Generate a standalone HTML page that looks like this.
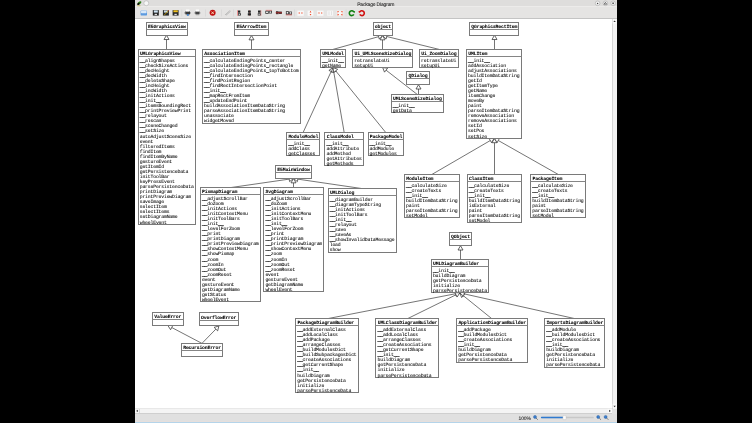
<!DOCTYPE html>
<html><head><meta charset="utf-8">
<style>
html,body{margin:0;padding:0;width:752px;height:423px;overflow:hidden;background:#000;}
#win{position:absolute;left:135px;top:0;width:482px;height:423px;background:#e3e3e3;overflow:hidden;}
#title{position:absolute;left:0;top:0;width:482px;height:6.4px;background:#dedddc;}
#tb{position:absolute;left:0;top:6.4px;width:482px;height:12.6px;background:#e5e4e3;border-top:1.6px solid #ecebea;border-bottom:1px solid #c4c4c4;box-sizing:border-box;}
#canvas{position:absolute;left:0;top:19px;width:477px;height:390px;background:#fff;}
#vsb{position:absolute;left:477px;top:19px;width:5px;height:390px;background:#f3f3f3;border-left:1px solid #d6d6d6;box-sizing:border-box;}
#hsb{position:absolute;left:0;top:408px;width:477px;height:5.6px;background:#f4f4f4;border-top:1px solid #e8e8e8;border-bottom:1px solid #cfcfcf;box-sizing:border-box;}
#corner{position:absolute;left:477px;top:409px;width:5px;height:4.5px;background:#e3e3e3;}
#status{position:absolute;left:0;top:413.5px;width:482px;height:8px;background:#e0e0e0;}
#bstrip{position:absolute;left:0;top:421.6px;width:482px;height:1.4px;background:#b4d4ea;}
#pstrip{position:absolute;left:0;top:420.6px;width:482px;height:1px;background:#e6dfdc;}
#tbsep{position:absolute;top:9px;width:0.6px;height:8px;background:#d0d0d0;}
svg{position:absolute;left:0;top:0;will-change:transform;}
.d line{stroke:#858585;stroke-width:1;}
.d line.cn{stroke:#3a3a3a;stroke-width:0.7;}
.d .bx{fill:#fff;stroke:#7a7a7a;stroke-width:1;}
.d .ar{fill:#fff;stroke:#333;stroke-width:0.75;}
.d text{font-family:"Liberation Mono",monospace;font-size:4.8px;letter-spacing:-0.18px;fill:#000;stroke:#000;stroke-width:0.06px;text-rendering:geometricPrecision;}
.d tspan.u{stroke-width:0.4px;stroke:#222;}
.d text.nm{font-weight:bold;font-size:4.8px;stroke-width:0.05px;}
</style></head><body>
<div id="win">
<div id="title"></div>
<div id="tb"></div>
<div id="canvas"></div>
<div id="vsb"></div>
<div id="hsb"></div>
<div id="corner"></div>
<div id="status"></div>
<div id="pstrip"></div>
<div id="bstrip"></div>
</div>
<svg class="d" width="752" height="423" viewBox="0 0 752 423" style="position:absolute;left:0;top:0">
<defs><clipPath id="cc"><rect x="135" y="19" width="477" height="390"/></clipPath></defs>
<g clip-path="url(#cc)">
<line class="cn" x1="166.50" y1="49.40" x2="166.50" y2="39.53"/>
<polygon class="ar" points="166.50,35.20 169.00,39.53 164.00,39.53"/>
<line class="cn" x1="251.50" y1="49.40" x2="251.50" y2="39.83"/>
<polygon class="ar" points="251.50,35.50 254.00,39.83 249.00,39.83"/>
<line class="cn" x1="494.50" y1="49.40" x2="494.50" y2="39.53"/>
<polygon class="ar" points="494.50,35.20 497.00,39.53 492.00,39.53"/>
<line class="cn" x1="333.00" y1="49.40" x2="378.63" y2="36.66"/>
<polygon class="ar" points="382.80,35.50 379.30,39.07 377.96,34.26"/>
<line class="cn" x1="382.50" y1="49.40" x2="382.50" y2="39.83"/>
<polygon class="ar" points="382.50,35.50 385.00,39.83 380.00,39.83"/>
<line class="cn" x1="439.15" y1="49.40" x2="386.71" y2="36.53"/>
<polygon class="ar" points="382.50,35.50 387.30,34.10 386.11,38.96"/>
<line class="cn" x1="303.05" y1="132.60" x2="331.19" y2="71.45"/>
<polygon class="ar" points="333.00,67.52 333.46,72.50 328.92,70.41"/>
<line class="cn" x1="344.20" y1="132.60" x2="333.73" y2="71.79"/>
<polygon class="ar" points="333.00,67.52 336.20,71.36 331.27,72.21"/>
<line class="cn" x1="385.85" y1="132.60" x2="335.73" y2="70.88"/>
<polygon class="ar" points="333.00,67.52 337.67,69.31 333.79,72.46"/>
<line class="cn" x1="417.20" y1="94.40" x2="386.07" y2="70.18"/>
<polygon class="ar" points="382.65,67.52 387.60,68.21 384.53,72.15"/>
<line class="cn" x1="418.50" y1="94.40" x2="418.50" y2="89.03"/>
<polygon class="ar" points="418.50,84.70 421.00,89.03 416.00,89.03"/>
<line class="cn" x1="432.00" y1="174.40" x2="490.31" y2="140.53"/>
<polygon class="ar" points="494.05,138.36 491.56,142.70 489.05,138.37"/>
<line class="cn" x1="494.50" y1="174.40" x2="494.50" y2="142.69"/>
<polygon class="ar" points="494.50,138.36 497.00,142.69 492.00,142.69"/>
<line class="cn" x1="558.15" y1="174.40" x2="498.27" y2="140.49"/>
<polygon class="ar" points="494.50,138.36 499.50,138.32 497.04,142.67"/>
<line class="cn" x1="230.55" y1="187.60" x2="289.21" y2="179.12"/>
<polygon class="ar" points="293.50,178.50 289.57,181.59 288.86,176.65"/>
<line class="cn" x1="293.50" y1="187.60" x2="293.50" y2="182.83"/>
<polygon class="ar" points="293.50,178.50 296.00,182.83 291.00,182.83"/>
<line class="cn" x1="362.15" y1="188.60" x2="297.78" y2="179.13"/>
<polygon class="ar" points="293.50,178.50 298.15,176.66 297.42,181.60"/>
<line class="cn" x1="460.50" y1="259.60" x2="460.50" y2="250.03"/>
<polygon class="ar" points="460.50,245.70 463.00,250.03 458.00,250.03"/>
<line class="cn" x1="326.80" y1="318.80" x2="455.60" y2="293.73"/>
<polygon class="ar" points="459.85,292.90 456.08,296.18 455.12,291.27"/>
<line class="cn" x1="407.25" y1="318.80" x2="455.97" y2="294.81"/>
<polygon class="ar" points="459.85,292.90 457.07,297.06 454.86,292.57"/>
<line class="cn" x1="491.95" y1="318.80" x2="463.22" y2="295.62"/>
<polygon class="ar" points="459.85,292.90 464.79,293.67 461.65,297.56"/>
<line class="cn" x1="574.70" y1="318.60" x2="464.08" y2="293.85"/>
<polygon class="ar" points="459.85,292.90 464.62,291.41 463.53,296.29"/>
<line class="cn" x1="201.95" y1="343.40" x2="171.73" y2="327.51"/>
<polygon class="ar" points="167.90,325.50 172.90,325.30 170.57,329.73"/>
<line class="cn" x1="201.95" y1="343.40" x2="215.88" y2="329.10"/>
<polygon class="ar" points="218.90,326.00 217.67,330.85 214.09,327.36"/>
<rect x="146.5" y="22.5" width="41.0" height="13.0" class="bx"/>
<line x1="146.5" y1="29.5" x2="187.5" y2="29.5"/>
<text x="148.00" y="27.90" class="nm">E5GraphicsView</text>
<rect x="234.5" y="22.5" width="34.0" height="13.0" class="bx"/>
<line x1="234.5" y1="29.5" x2="268.5" y2="29.5"/>
<text x="236.50" y="28.20" class="nm">E5ArrowItem</text>
<rect x="373.5" y="22.5" width="19.0" height="13.0" class="bx"/>
<line x1="373.5" y1="29.5" x2="392.5" y2="29.5"/>
<text x="374.80" y="28.20" class="nm">object</text>
<rect x="469.5" y="22.5" width="49.0" height="13.0" class="bx"/>
<line x1="469.5" y1="29.5" x2="518.5" y2="29.5"/>
<text x="471.30" y="27.90" class="nm">QGraphicsRectItem</text>
<rect x="138.5" y="49.5" width="57.0" height="175.0" class="bx"/>
<line x1="138.5" y1="56.5" x2="195.5" y2="56.5"/>
<text x="139.90" y="54.60" class="nm">UMLGraphicsView</text>
<text x="139.70" y="61.60"><tspan class="u">__</tspan>alignShapes</text>
<text x="139.70" y="66.66"><tspan class="u">__</tspan>checkSizeActions</text>
<text x="139.70" y="71.72"><tspan class="u">__</tspan>decHeight</text>
<text x="139.70" y="76.78"><tspan class="u">__</tspan>decWidth</text>
<text x="139.70" y="81.84"><tspan class="u">__</tspan>deleteShape</text>
<text x="139.70" y="86.90"><tspan class="u">__</tspan>incHeight</text>
<text x="139.70" y="91.96"><tspan class="u">__</tspan>incWidth</text>
<text x="139.70" y="97.02"><tspan class="u">__</tspan>initActions</text>
<text x="139.70" y="102.08"><tspan class="u">__</tspan>init<tspan class="u">__</tspan></text>
<text x="139.70" y="107.14"><tspan class="u">__</tspan>itemsBoundingRect</text>
<text x="139.70" y="112.20"><tspan class="u">__</tspan>printPreviewPrint</text>
<text x="139.70" y="117.26"><tspan class="u">__</tspan>relayout</text>
<text x="139.70" y="122.32"><tspan class="u">__</tspan>rescan</text>
<text x="139.70" y="127.38"><tspan class="u">__</tspan>sceneChanged</text>
<text x="139.70" y="132.44"><tspan class="u">__</tspan>setSize</text>
<text x="139.70" y="137.50">autoAdjustSceneSize</text>
<text x="139.70" y="142.56">event</text>
<text x="139.70" y="147.62">filteredItems</text>
<text x="139.70" y="152.68">findItem</text>
<text x="139.70" y="157.74">findItemByName</text>
<text x="139.70" y="162.80">gestureEvent</text>
<text x="139.70" y="167.86">getItemId</text>
<text x="139.70" y="172.92">getPersistenceData</text>
<text x="139.70" y="177.98">initToolBar</text>
<text x="139.70" y="183.04">keyPressEvent</text>
<text x="139.70" y="188.10">parsePersistenceData</text>
<text x="139.70" y="193.16">printDiagram</text>
<text x="139.70" y="198.22">printPreviewDiagram</text>
<text x="139.70" y="203.28">saveImage</text>
<text x="139.70" y="208.34">selectItem</text>
<text x="139.70" y="213.40">selectItems</text>
<text x="139.70" y="218.46">setDiagramName</text>
<text x="139.70" y="223.52">wheelEvent</text>
<rect x="202.5" y="49.5" width="98.0" height="74.0" class="bx"/>
<line x1="202.5" y1="56.5" x2="300.5" y2="56.5"/>
<text x="204.30" y="54.60" class="nm">AssociationItem</text>
<text x="204.10" y="61.60"><tspan class="u">__</tspan>calculateEndingPoints<tspan class="u">_</tspan>center</text>
<text x="204.10" y="66.66"><tspan class="u">__</tspan>calculateEndingPoints<tspan class="u">_</tspan>rectangle</text>
<text x="204.10" y="71.72"><tspan class="u">__</tspan>calculateEndingPoints<tspan class="u">_</tspan>topToBottom</text>
<text x="204.10" y="76.78"><tspan class="u">__</tspan>findIntersection</text>
<text x="204.10" y="81.84"><tspan class="u">__</tspan>findPointRegion</text>
<text x="204.10" y="86.90"><tspan class="u">__</tspan>findRectIntersectionPoint</text>
<text x="204.10" y="91.96"><tspan class="u">__</tspan>init<tspan class="u">__</tspan></text>
<text x="204.10" y="97.02"><tspan class="u">__</tspan>mapRectFromItem</text>
<text x="204.10" y="102.08"><tspan class="u">__</tspan>updateEndPoint</text>
<text x="204.10" y="107.14">buildAssociationItemDataString</text>
<text x="204.10" y="112.20">parseAssociationItemDataString</text>
<text x="204.10" y="117.26">unassociate</text>
<text x="204.10" y="122.32">widgetMoved</text>
<rect x="320.5" y="49.5" width="25.0" height="18.0" class="bx"/>
<line x1="320.5" y1="56.5" x2="345.5" y2="56.5"/>
<text x="322.20" y="54.60" class="nm">UMLModel</text>
<text x="322.00" y="61.60"><tspan class="u">__</tspan>init<tspan class="u">__</tspan></text>
<text x="322.00" y="66.66">getName</text>
<rect x="352.5" y="49.5" width="60.0" height="18.0" class="bx"/>
<line x1="352.5" y1="56.5" x2="412.5" y2="56.5"/>
<text x="354.50" y="54.60" class="nm">Ui_UMLSceneSizeDialog</text>
<text x="354.30" y="61.60">retranslateUi</text>
<text x="354.30" y="66.66">setupUi</text>
<rect x="419.5" y="49.5" width="39.0" height="18.0" class="bx"/>
<line x1="419.5" y1="56.5" x2="458.5" y2="56.5"/>
<text x="421.30" y="54.60" class="nm">Ui_ZoomDialog</text>
<text x="421.10" y="61.60">retranslateUi</text>
<text x="421.10" y="66.66">setupUi</text>
<rect x="466.5" y="49.5" width="55.0" height="89.0" class="bx"/>
<line x1="466.5" y1="56.5" x2="521.5" y2="56.5"/>
<text x="468.30" y="54.60" class="nm">UMLItem</text>
<text x="468.10" y="61.60"><tspan class="u">__</tspan>init<tspan class="u">__</tspan></text>
<text x="468.10" y="66.66">addAssociation</text>
<text x="468.10" y="71.72">adjustAssociations</text>
<text x="468.10" y="76.78">buildItemDataString</text>
<text x="468.10" y="81.84">getId</text>
<text x="468.10" y="86.90">getItemType</text>
<text x="468.10" y="91.96">getName</text>
<text x="468.10" y="97.02">itemChange</text>
<text x="468.10" y="102.08">moveBy</text>
<text x="468.10" y="107.14">paint</text>
<text x="468.10" y="112.20">parseItemDataString</text>
<text x="468.10" y="117.26">removeAssociation</text>
<text x="468.10" y="122.32">removeAssociations</text>
<text x="468.10" y="127.38">setId</text>
<text x="468.10" y="132.44">setPos</text>
<text x="468.10" y="137.50">setSize</text>
<rect x="406.5" y="71.5" width="23.0" height="13.0" class="bx"/>
<line x1="406.5" y1="78.5" x2="429.5" y2="78.5"/>
<text x="408.60" y="77.40" class="nm">QDialog</text>
<rect x="391.5" y="94.5" width="52.0" height="18.0" class="bx"/>
<line x1="391.5" y1="101.5" x2="443.5" y2="101.5"/>
<text x="393.00" y="99.60" class="nm">UMLSceneSizeDialog</text>
<text x="392.80" y="106.60"><tspan class="u">__</tspan>init<tspan class="u">__</tspan></text>
<text x="392.80" y="111.66">getData</text>
<rect x="286.5" y="132.5" width="33.0" height="23.0" class="bx"/>
<line x1="286.5" y1="139.5" x2="319.5" y2="139.5"/>
<text x="288.40" y="137.80" class="nm">ModuleModel</text>
<text x="288.20" y="144.80"><tspan class="u">__</tspan>init<tspan class="u">__</tspan></text>
<text x="288.20" y="149.86">addClass</text>
<text x="288.20" y="154.92">getClasses</text>
<rect x="324.5" y="132.5" width="39.0" height="33.0" class="bx"/>
<line x1="324.5" y1="139.5" x2="363.5" y2="139.5"/>
<text x="326.70" y="137.80" class="nm">ClassModel</text>
<text x="326.50" y="144.80"><tspan class="u">__</tspan>init<tspan class="u">__</tspan></text>
<text x="326.50" y="149.86">addAttribute</text>
<text x="326.50" y="154.92">addMethod</text>
<text x="326.50" y="159.98">getAttributes</text>
<text x="326.50" y="165.04">getMethods</text>
<rect x="368.5" y="132.5" width="35.0" height="23.0" class="bx"/>
<line x1="368.5" y1="139.5" x2="403.5" y2="139.5"/>
<text x="369.80" y="137.80" class="nm">PackageModel</text>
<text x="369.60" y="144.80"><tspan class="u">__</tspan>init<tspan class="u">__</tspan></text>
<text x="369.60" y="149.86">addModule</text>
<text x="369.60" y="154.92">getModules</text>
<rect x="404.5" y="174.5" width="55.0" height="43.0" class="bx"/>
<line x1="404.5" y1="181.5" x2="459.5" y2="181.5"/>
<text x="406.30" y="179.60" class="nm">ModuleItem</text>
<text x="406.10" y="186.60"><tspan class="u">__</tspan>calculateSize</text>
<text x="406.10" y="191.66"><tspan class="u">__</tspan>createTexts</text>
<text x="406.10" y="196.72"><tspan class="u">__</tspan>init<tspan class="u">__</tspan></text>
<text x="406.10" y="201.78">buildItemDataString</text>
<text x="406.10" y="206.84">paint</text>
<text x="406.10" y="211.90">parseItemDataString</text>
<text x="406.10" y="216.96">setModel</text>
<rect x="467.5" y="174.5" width="54.0" height="48.0" class="bx"/>
<line x1="467.5" y1="181.5" x2="521.5" y2="181.5"/>
<text x="468.90" y="179.60" class="nm">ClassItem</text>
<text x="468.70" y="186.60"><tspan class="u">__</tspan>calculateSize</text>
<text x="468.70" y="191.66"><tspan class="u">__</tspan>createTexts</text>
<text x="468.70" y="196.72"><tspan class="u">__</tspan>init<tspan class="u">__</tspan></text>
<text x="468.70" y="201.78">buildItemDataString</text>
<text x="468.70" y="206.84">isExternal</text>
<text x="468.70" y="211.90">paint</text>
<text x="468.70" y="216.96">parseItemDataString</text>
<text x="468.70" y="222.02">setModel</text>
<rect x="530.5" y="174.5" width="55.0" height="43.0" class="bx"/>
<line x1="530.5" y1="181.5" x2="585.5" y2="181.5"/>
<text x="532.50" y="179.60" class="nm">PackageItem</text>
<text x="532.30" y="186.60"><tspan class="u">__</tspan>calculateSize</text>
<text x="532.30" y="191.66"><tspan class="u">__</tspan>createTexts</text>
<text x="532.30" y="196.72"><tspan class="u">__</tspan>init<tspan class="u">__</tspan></text>
<text x="532.30" y="201.78">buildItemDataString</text>
<text x="532.30" y="206.84">paint</text>
<text x="532.30" y="211.90">parseItemDataString</text>
<text x="532.30" y="216.96">setModel</text>
<rect x="275.5" y="165.5" width="36.0" height="13.0" class="bx"/>
<line x1="275.5" y1="172.5" x2="311.5" y2="172.5"/>
<text x="277.30" y="171.20" class="nm">E5MainWindow</text>
<rect x="200.5" y="187.5" width="60.0" height="114.0" class="bx"/>
<line x1="200.5" y1="194.5" x2="260.5" y2="194.5"/>
<text x="202.10" y="192.80" class="nm">PixmapDiagram</text>
<text x="201.90" y="199.80"><tspan class="u">__</tspan>adjustScrollBar</text>
<text x="201.90" y="204.86"><tspan class="u">__</tspan>doZoom</text>
<text x="201.90" y="209.92"><tspan class="u">__</tspan>initActions</text>
<text x="201.90" y="214.98"><tspan class="u">__</tspan>initContextMenu</text>
<text x="201.90" y="220.04"><tspan class="u">__</tspan>initToolBars</text>
<text x="201.90" y="225.10"><tspan class="u">__</tspan>init<tspan class="u">__</tspan></text>
<text x="201.90" y="230.16"><tspan class="u">__</tspan>levelForZoom</text>
<text x="201.90" y="235.22"><tspan class="u">__</tspan>print</text>
<text x="201.90" y="240.28"><tspan class="u">__</tspan>printDiagram</text>
<text x="201.90" y="245.34"><tspan class="u">__</tspan>printPreviewDiagram</text>
<text x="201.90" y="250.40"><tspan class="u">__</tspan>showContextMenu</text>
<text x="201.90" y="255.46"><tspan class="u">__</tspan>showPixmap</text>
<text x="201.90" y="260.52"><tspan class="u">__</tspan>zoom</text>
<text x="201.90" y="265.58"><tspan class="u">__</tspan>zoomIn</text>
<text x="201.90" y="270.64"><tspan class="u">__</tspan>zoomOut</text>
<text x="201.90" y="275.70"><tspan class="u">__</tspan>zoomReset</text>
<text x="201.90" y="280.76">event</text>
<text x="201.90" y="285.82">gestureEvent</text>
<text x="201.90" y="290.88">getDiagramName</text>
<text x="201.90" y="295.94">getStatus</text>
<text x="201.90" y="301.00">wheelEvent</text>
<rect x="263.5" y="187.5" width="60.0" height="104.0" class="bx"/>
<line x1="263.5" y1="194.5" x2="323.5" y2="194.5"/>
<text x="265.60" y="192.80" class="nm">SvgDiagram</text>
<text x="265.40" y="199.80"><tspan class="u">__</tspan>adjustScrollBar</text>
<text x="265.40" y="204.86"><tspan class="u">__</tspan>doZoom</text>
<text x="265.40" y="209.92"><tspan class="u">__</tspan>initActions</text>
<text x="265.40" y="214.98"><tspan class="u">__</tspan>initContextMenu</text>
<text x="265.40" y="220.04"><tspan class="u">__</tspan>initToolBars</text>
<text x="265.40" y="225.10"><tspan class="u">__</tspan>init<tspan class="u">__</tspan></text>
<text x="265.40" y="230.16"><tspan class="u">__</tspan>levelForZoom</text>
<text x="265.40" y="235.22"><tspan class="u">__</tspan>print</text>
<text x="265.40" y="240.28"><tspan class="u">__</tspan>printDiagram</text>
<text x="265.40" y="245.34"><tspan class="u">__</tspan>printPreviewDiagram</text>
<text x="265.40" y="250.40"><tspan class="u">__</tspan>showContextMenu</text>
<text x="265.40" y="255.46"><tspan class="u">__</tspan>zoom</text>
<text x="265.40" y="260.52"><tspan class="u">__</tspan>zoomIn</text>
<text x="265.40" y="265.58"><tspan class="u">__</tspan>zoomOut</text>
<text x="265.40" y="270.64"><tspan class="u">__</tspan>zoomReset</text>
<text x="265.40" y="275.70">event</text>
<text x="265.40" y="280.76">gestureEvent</text>
<text x="265.40" y="285.82">getDiagramName</text>
<text x="265.40" y="290.88">wheelEvent</text>
<rect x="328.5" y="188.5" width="68.0" height="64.0" class="bx"/>
<line x1="328.5" y1="195.5" x2="396.5" y2="195.5"/>
<text x="329.90" y="193.80" class="nm">UMLDialog</text>
<text x="329.70" y="200.80"><tspan class="u">__</tspan>diagramBuilder</text>
<text x="329.70" y="205.86"><tspan class="u">__</tspan>diagramTypeString</text>
<text x="329.70" y="210.92"><tspan class="u">__</tspan>initActions</text>
<text x="329.70" y="215.98"><tspan class="u">__</tspan>initToolBars</text>
<text x="329.70" y="221.04"><tspan class="u">__</tspan>init<tspan class="u">__</tspan></text>
<text x="329.70" y="226.10"><tspan class="u">__</tspan>relayout</text>
<text x="329.70" y="231.16"><tspan class="u">__</tspan>save</text>
<text x="329.70" y="236.22"><tspan class="u">__</tspan>saveAs</text>
<text x="329.70" y="241.28"><tspan class="u">__</tspan>showInvalidDataMessage</text>
<text x="329.70" y="246.34">load</text>
<text x="329.70" y="251.40">show</text>
<rect x="449.5" y="232.5" width="22.0" height="13.0" class="bx"/>
<line x1="449.5" y1="239.5" x2="471.5" y2="239.5"/>
<text x="451.10" y="238.40" class="nm">QObject</text>
<rect x="431.5" y="259.5" width="57.0" height="33.0" class="bx"/>
<line x1="431.5" y1="266.5" x2="488.5" y2="266.5"/>
<text x="433.10" y="264.80" class="nm">UMLDiagramBuilder</text>
<text x="432.90" y="271.80"><tspan class="u">__</tspan>init<tspan class="u">__</tspan></text>
<text x="432.90" y="276.86">buildDiagram</text>
<text x="432.90" y="281.92">getPersistenceData</text>
<text x="432.90" y="286.98">initialize</text>
<text x="432.90" y="292.04">parsePersistenceData</text>
<rect x="152.5" y="312.5" width="31.0" height="13.0" class="bx"/>
<line x1="152.5" y1="319.5" x2="183.5" y2="319.5"/>
<text x="154.20" y="318.20" class="nm">ValueError</text>
<rect x="199.5" y="312.5" width="39.0" height="13.0" class="bx"/>
<line x1="199.5" y1="320.5" x2="238.5" y2="320.5"/>
<text x="201.10" y="318.70" class="nm">OverflowError</text>
<rect x="181.5" y="343.5" width="41.0" height="13.0" class="bx"/>
<line x1="181.5" y1="350.5" x2="222.5" y2="350.5"/>
<text x="183.20" y="349.20" class="nm">RecursionError</text>
<rect x="295.5" y="318.5" width="63.0" height="74.0" class="bx"/>
<line x1="295.5" y1="325.5" x2="358.5" y2="325.5"/>
<text x="297.40" y="324.00" class="nm">PackageDiagramBuilder</text>
<text x="297.20" y="331.00"><tspan class="u">__</tspan>addExternalClass</text>
<text x="297.20" y="336.06"><tspan class="u">__</tspan>addLocalClass</text>
<text x="297.20" y="341.12"><tspan class="u">__</tspan>addPackage</text>
<text x="297.20" y="346.18"><tspan class="u">__</tspan>arrangeClasses</text>
<text x="297.20" y="351.24"><tspan class="u">__</tspan>buildModulesDict</text>
<text x="297.20" y="356.30"><tspan class="u">__</tspan>buildSubpackagesDict</text>
<text x="297.20" y="361.36"><tspan class="u">__</tspan>createAssociations</text>
<text x="297.20" y="366.42"><tspan class="u">__</tspan>getCurrentShape</text>
<text x="297.20" y="371.48"><tspan class="u">__</tspan>init<tspan class="u">__</tspan></text>
<text x="297.20" y="376.54">buildDiagram</text>
<text x="297.20" y="381.60">getPersistenceData</text>
<text x="297.20" y="386.66">initialize</text>
<text x="297.20" y="391.72">parsePersistenceData</text>
<rect x="375.5" y="318.5" width="63.0" height="59.0" class="bx"/>
<line x1="375.5" y1="325.5" x2="438.5" y2="325.5"/>
<text x="377.70" y="324.00" class="nm">UMLClassDiagramBuilder</text>
<text x="377.50" y="331.00"><tspan class="u">__</tspan>addExternalClass</text>
<text x="377.50" y="336.06"><tspan class="u">__</tspan>addLocalClass</text>
<text x="377.50" y="341.12"><tspan class="u">__</tspan>arrangeClasses</text>
<text x="377.50" y="346.18"><tspan class="u">__</tspan>createAssociations</text>
<text x="377.50" y="351.24"><tspan class="u">__</tspan>getCurrentShape</text>
<text x="377.50" y="356.30"><tspan class="u">__</tspan>init<tspan class="u">__</tspan></text>
<text x="377.50" y="361.36">buildDiagram</text>
<text x="377.50" y="366.42">getPersistenceData</text>
<text x="377.50" y="371.48">initialize</text>
<text x="377.50" y="376.54">parsePersistenceData</text>
<rect x="456.5" y="318.5" width="71.0" height="44.0" class="bx"/>
<line x1="456.5" y1="325.5" x2="527.5" y2="325.5"/>
<text x="458.40" y="324.00" class="nm">ApplicationDiagramBuilder</text>
<text x="458.20" y="331.00"><tspan class="u">__</tspan>addPackage</text>
<text x="458.20" y="336.06"><tspan class="u">__</tspan>buildModulesDict</text>
<text x="458.20" y="341.12"><tspan class="u">__</tspan>createAssociations</text>
<text x="458.20" y="346.18"><tspan class="u">__</tspan>init<tspan class="u">__</tspan></text>
<text x="458.20" y="351.24">buildDiagram</text>
<text x="458.20" y="356.30">getPersistenceData</text>
<text x="458.20" y="361.36">parsePersistenceData</text>
<rect x="544.5" y="318.5" width="60.0" height="49.0" class="bx"/>
<line x1="544.5" y1="325.5" x2="604.5" y2="325.5"/>
<text x="546.50" y="323.80" class="nm">ImportsDiagramBuilder</text>
<text x="546.30" y="330.80"><tspan class="u">__</tspan>addModule</text>
<text x="546.30" y="335.86"><tspan class="u">__</tspan>buildModulesDict</text>
<text x="546.30" y="340.92"><tspan class="u">__</tspan>createAssociations</text>
<text x="546.30" y="345.98"><tspan class="u">__</tspan>init<tspan class="u">__</tspan></text>
<text x="546.30" y="351.04">buildDiagram</text>
<text x="546.30" y="356.10">getPersistenceData</text>
<text x="546.30" y="361.16">initialize</text>
<text x="546.30" y="366.22">parsePersistenceData</text>
</g>

<!-- title bar -->
<g>
 <ellipse cx="139.4" cy="3.0" rx="2.3" ry="1.3" transform="rotate(-38 139.4 3.0)" fill="#2e7a18"/>
 <ellipse cx="138.4" cy="4.0" rx="1.3" ry="0.9" transform="rotate(-38 138.4 4.0)" fill="#0c0c0c"/>
 <rect x="137.2" y="5.0" width="3.3" height="1.3" fill="#cfc38c"/>
 <circle cx="146.3" cy="3.2" r="2.5" fill="#f6f6f6" stroke="#b0b0b0" stroke-width="0.6"/>
 <text x="375.7" y="5.5" text-anchor="middle" style="font-family:'Liberation Sans',sans-serif;font-size:5.0px;fill:#2a2a2a">Package Diagram</text>
 <circle cx="597.6" cy="3.3" r="2.3" fill="#f4f4f4" stroke="#a8a8a8" stroke-width="0.6"/>
 <circle cx="597.6" cy="3.5" r="0.7" fill="#444"/>
 <circle cx="605.4" cy="3.3" r="2.3" fill="#f4f4f4" stroke="#a8a8a8" stroke-width="0.6"/>
 <path d="M604.1,4.2 L605.4,2.3 L606.7,4.2 Z" fill="none" stroke="#333" stroke-width="0.6"/>
 <circle cx="613.1" cy="3.3" r="2.3" fill="#f4f4f4" stroke="#a8a8a8" stroke-width="0.6"/>
 <rect x="612.3" y="2.5" width="1.6" height="1.6" fill="#555"/>
</g>
<!-- toolbar icons -->
<g>
 <rect x="181.6" y="9.5" width="0.5" height="7" fill="#cfcfcf"/>
 <rect x="205.2" y="9.5" width="0.5" height="7" fill="#cfcfcf"/>
 <rect x="221.2" y="9.5" width="0.5" height="7" fill="#cfcfcf"/>
 <rect x="233.4" y="9.5" width="0.5" height="7" fill="#cfcfcf"/>
 <rect x="294" y="9.5" width="0.5" height="7" fill="#cfcfcf"/>
 <rect x="345.8" y="9.5" width="0.5" height="7" fill="#cfcfcf"/>
 <!-- open -->
 <rect x="140.6" y="10.4" width="6.4" height="5.2" rx="1.2" fill="#5b9ae0"/>
 <rect x="141" y="10.6" width="5.6" height="2.6" rx="0.8" fill="#d8e8f8"/>
 <!-- save -->
 <rect x="152.8" y="10.1" width="6" height="5.5" fill="#222"/>
 <rect x="153.8" y="10.4" width="4" height="2.2" fill="#d0e4f4"/>
 <rect x="154.6" y="13.8" width="2.4" height="1.3" fill="#ddd"/>
 <!-- save as -->
 <rect x="162.9" y="10.1" width="6" height="5.5" fill="#2a2a2a"/>
 <rect x="163.9" y="10.4" width="4" height="2.2" fill="#c8d8e0"/>
 <path d="M164.2,15.2 L168.4,10.6" stroke="#c9a000" stroke-width="0.8"/>
 <path d="M168.2,10.2 L168.9,10.9" stroke="#d33" stroke-width="0.8"/>
 <!-- save all -->
 <rect x="172.6" y="10.1" width="6" height="5.5" fill="#2a2a2a"/>
 <rect x="173.4" y="10.3" width="4.4" height="1.9" fill="#f0c020"/>
 <rect x="174.4" y="13.8" width="2.4" height="1.3" fill="#ddd"/>
 <!-- printers -->
 <rect x="184.4" y="12" width="6.4" height="1.8" fill="#a0a0a0"/>
 <rect x="185.4" y="11.3" width="4.6" height="3" fill="#3a3a3a"/>
 <rect x="186" y="9.5" width="3.4" height="2" fill="#fdfdfd"/>
 <rect x="185.8" y="14.2" width="3.8" height="1" fill="#8a8a8a"/>
 <rect x="187" y="13.9" width="1.8" height="1.9" rx="0.5" fill="#3a80d0"/>
 <rect x="194.4" y="12" width="6" height="1.8" fill="#a8a8a8"/>
 <rect x="195.4" y="11.3" width="4" height="3" fill="#444"/>
 <rect x="195.8" y="9.5" width="3.2" height="2" fill="#fdfdfd"/>
 <rect x="195.8" y="14.2" width="3.4" height="1" fill="#999"/>
 <!-- close -->
 <circle cx="212.6" cy="12.8" r="3" fill="#c01010"/>
 <path d="M211.3,11.5 L213.9,14.1 M213.9,11.5 L211.3,14.1" stroke="#f8e8c0" stroke-width="0.9"/>
 <!-- pencil -->
 <path d="M225,15 L229.8,10.6 M226,15.3 L230.6,11.2" stroke="#a8a8a8" stroke-width="0.7"/>
 <!-- align icons -->
 <rect x="237.3" y="10.2" width="0.6" height="5.6" fill="#f06060"/>
 <rect x="238" y="10.5" width="2.3" height="2.2" fill="#222"/><rect x="238" y="13.2" width="2.8" height="2.3" fill="#222"/><rect x="238.6" y="13.8" width="1.4" height="1" fill="#eee"/>
 <rect x="249.1" y="10.2" width="0.6" height="5.6" fill="#f06060"/>
 <rect x="248" y="10.5" width="2.8" height="2.2" fill="#222"/><rect x="247.8" y="13.2" width="3.2" height="2.3" fill="#222"/>
 <rect x="260.6" y="10.2" width="0.6" height="5.6" fill="#f06060"/>
 <rect x="258" y="10.5" width="2.6" height="2.2" fill="#222"/><rect x="257.8" y="13.2" width="2.8" height="2.3" fill="#222"/><rect x="258.4" y="13.8" width="1.4" height="1" fill="#eee"/>
 <rect x="265.8" y="9.9" width="6.2" height="0.7" fill="#f07070"/>
 <rect x="265.4" y="10.8" width="3.2" height="3" fill="#222"/><rect x="266.1" y="11.5" width="1.8" height="1.6" fill="#f4f4f4"/>
 <rect x="268.8" y="10.8" width="3.2" height="2.6" fill="#222"/><rect x="269.5" y="11.4" width="1.8" height="1.4" fill="#f4f4f4"/>
 <rect x="276" y="11.2" width="2.6" height="3" fill="#333"/><rect x="279" y="11.6" width="2.8" height="2.4" fill="#333"/>
 <rect x="275.8" y="11.9" width="6.1" height="1.6" fill="#8a2a2a"/>
 <rect x="285.8" y="14.5" width="6.2" height="0.7" fill="#c02020"/>
 <rect x="285.9" y="11.3" width="3" height="3" fill="#222"/><rect x="286.6" y="12" width="1.6" height="1.6" fill="#f4f4f4"/>
 <rect x="289.2" y="11.6" width="2.7" height="2.7" fill="#222"/><rect x="289.8" y="12.2" width="1.5" height="1.5" fill="#f4f4f4"/>
 <!-- resize icons -->
 <rect x="297.4" y="10.6" width="6.4" height="5.2" fill="#f8f8f8"/>
 <path d="M298,13 L299.8,12.2 L299.8,13.8 Z M303.2,13 L301.4,12.2 L301.4,13.8 Z" fill="#ee4422"/>
 <rect x="307.6" y="10.6" width="5.8" height="5.2" fill="#f8f8f8"/>
 <path d="M310.5,10.8 L309.6,12.4 L311.4,12.4 Z M310.5,15.6 L309.6,14 L311.4,14 Z" fill="#ee4422"/>
 <rect x="317.1" y="10.6" width="6.4" height="5.2" fill="#f8f8f8"/>
 <path d="M317.7,13 L319.5,12.2 L319.5,13.8 Z M322.9,13 L321.1,12.2 L321.1,13.8 Z" fill="#ee5533"/>
 <rect x="327.2" y="10.6" width="5.9" height="5.2" fill="#f6f6f6"/>
 <rect x="328.6" y="11.2" width="0.8" height="4" fill="#ddd"/><rect x="331" y="11.2" width="0.8" height="4" fill="#ddd"/>
 <rect x="336.8" y="10.6" width="6.4" height="5.2" fill="#f8f8f8"/>
 <path d="M337.3,11 L339.2,11.4 L337.7,12.8 Z M342.7,11 L340.8,11.4 L342.3,12.8 Z M337.3,15.4 L339.2,15 L337.7,13.6 Z M342.7,15.4 L340.8,15 L342.3,13.6 Z" fill="#ee4422"/>
 <!-- redo/undo -->
 <path d="M353.8,12 A2.4,2.4 0 1 0 353.8,14.4" fill="none" stroke="#108010" stroke-width="1.6"/>
 <path d="M352.6,11 L355.2,11.2 L354.4,13.2 Z" fill="#108010"/>
 <path d="M359.8,12 A2.4,2.4 0 1 1 359.8,14.4" fill="none" stroke="#d01010" stroke-width="1.6"/>
 <path d="M361,11 L358.4,11.2 L359.2,13.2 Z" fill="#d01010"/>
</g>
<!-- scrollbars -->
<g>
 <rect x="612.6" y="19.2" width="4" height="4.2" fill="#fafafa"/><path d="M614.6,20.6 L613.4,22 L615.8,22 Z" fill="#333"/>
 <rect x="612.6" y="403.8" width="4" height="4.2" fill="#fafafa"/><path d="M614.6,407.2 L613.4,405.8 L615.8,405.8 Z" fill="#333"/>
 <path d="M136.1,410.9 L137.9,409.7 L137.9,412.1 Z" fill="#333"/>
 <rect x="139.3" y="409" width="0.5" height="4" fill="#bbb"/>
 <rect x="607.6" y="408.8" width="4.2" height="4.2" fill="#fafafa"/><path d="M610.9,410.9 L609.1,409.7 L609.1,412.1 Z" fill="#333"/>
</g>
<!-- status bar -->
<g>
 <text x="518.6" y="420.1" style="font-family:'Liberation Sans',sans-serif;font-size:5px;fill:#222">100%</text>
 <circle cx="535" cy="416.9" r="1.5" fill="#3a7fd0" stroke="#1d4f90" stroke-width="0.4"/>
 <path d="M536,418 L537.8,419.8" stroke="#555" stroke-width="0.7"/>
 <rect x="540.9" y="416.8" width="52.9" height="1.5" rx="0.7" fill="#c8c8c8"/>
 <rect x="540.9" y="416.8" width="22.3" height="1.5" rx="0.7" fill="#2f7ad0"/>
 <rect x="562.9" y="415.6" width="3.2" height="4" rx="0.5" fill="#fbfbfb" stroke="#aaa" stroke-width="0.3"/>
 <circle cx="598.2" cy="416.9" r="1.5" fill="#3a7fd0" stroke="#1d4f90" stroke-width="0.4"/>
 <path d="M599.2,418 L601,419.8" stroke="#555" stroke-width="0.7"/>
 <circle cx="605.6" cy="416.9" r="1.5" fill="#3a7fd0" stroke="#1d4f90" stroke-width="0.4"/>
 <path d="M606.6,418 L608.4,419.8" stroke="#555" stroke-width="0.7"/>
</g>

</svg>
</body></html>
